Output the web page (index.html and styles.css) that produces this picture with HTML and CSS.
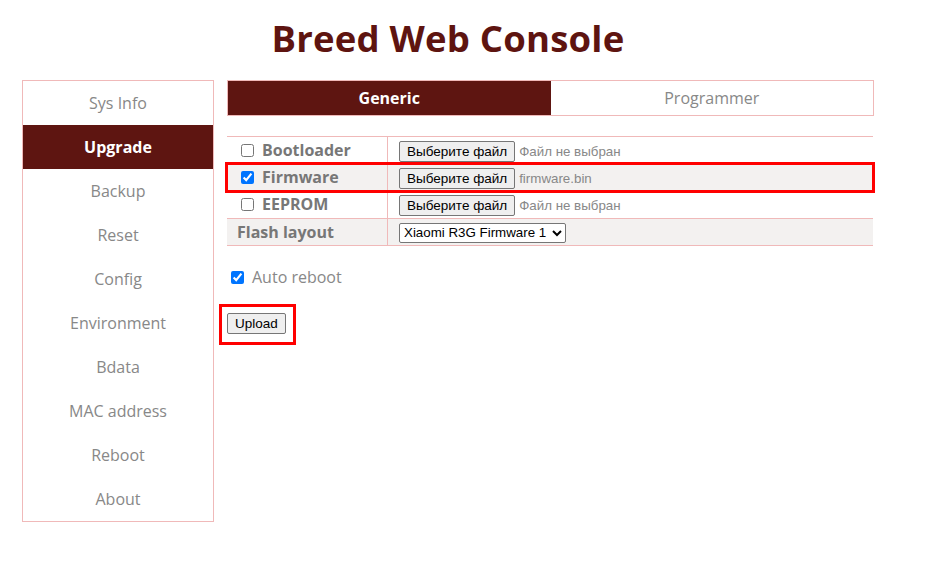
FILE: index.html
```html
<!DOCTYPE html>
<html>
<head>
<meta charset="utf-8">
<link rel="stylesheet" href="styles.css">
</head>
<body>
<div class="page">
  <h1 class="title">Breed Web Console</h1>
  <div class="layout">
    <nav class="sidebar">
      <div class="nav-item">Sys Info</div>
      <div class="nav-item active">Upgrade</div>
      <div class="nav-item">Backup</div>
      <div class="nav-item">Reset</div>
      <div class="nav-item">Config</div>
      <div class="nav-item">Environment</div>
      <div class="nav-item">Bdata</div>
      <div class="nav-item">MAC address</div>
      <div class="nav-item">Reboot</div>
      <div class="nav-item">About</div>
    </nav>
    <main class="main">
      <div class="tabs">
        <div class="tab active">Generic</div>
        <div class="tab">Programmer</div>
      </div>
      <div class="form-table">
        <div class="row first">
          <div class="cell label"><input type="checkbox" class="chk"><span>Bootloader</span></div>
          <div class="cell value"><span class="btn">Выберите файл</span><span class="file-name">Файл не выбран</span></div>
        </div>
        <div class="row alt highlight">
          <div class="cell label"><input type="checkbox" class="chk" checked><span>Firmware</span></div>
          <div class="cell value"><span class="btn">Выберите файл</span><span class="file-name">firmware.bin</span></div>
        </div>
        <div class="row">
          <div class="cell label"><input type="checkbox" class="chk"><span>EEPROM</span></div>
          <div class="cell value"><span class="btn">Выберите файл</span><span class="file-name">Файл не выбран</span></div>
        </div>
        <div class="row alt sep">
          <div class="cell label plain"><span>Flash layout</span></div>
          <div class="cell value"><select class="sel"><option>Xiaomi R3G Firmware 1</option></select></div>
        </div>
      </div>
      <label class="auto"><input type="checkbox" class="chk" checked><span>Auto reboot</span></label>
      <div class="upload-wrap"><span class="btn upload">Upload</span></div>
    </main>
  </div>
</div>
</body>
</html>
```

FILE: styles.css
```css
* { box-sizing: border-box; }
body {
  margin: 0;
  font-family: "Open Sans", "Noto Sans", sans-serif;
  background: #fff;
}
.page {
  width: 852px;
  margin-left: 22px;
}
.title {
  margin: 0;
  height: 80px;
  padding-top: 14px;
  text-align: center;
  font-size: 36.5px;
  line-height: 48px;
  font-weight: 700;
  color: #5e1410;
  letter-spacing: 0.2px;
}
.layout {
  display: flex;
  gap: 13px;
  align-items: flex-start;
}
.sidebar {
  width: 192px;
  border: 1px solid #f0b9b9;
  display: flex;
  flex-direction: column;
}
.nav-item {
  height: 44px;
  line-height: 44px;
  text-align: center;
  font-size: 16px;
  color: #888;
}
.nav-item.active {
  background: #5e1511;
  color: #fff;
  font-weight: 700;
}
.main {
  width: 647px;
}
.tabs {
  display: flex;
  height: 36px;
  border: 1px solid #f0b9b9;
}
.tab {
  flex: 1;
  text-align: center;
  line-height: 34px;
  font-size: 16px;
  color: #888;
}
.tab.active {
  background: #5e1511;
  color: #fff;
  font-weight: 700;
}
.form-table {
  margin-top: 20px;
  width: 646px;
  border-top: 1px solid #f0b9b9;
  border-bottom: 1px solid #f0b9b9;
}
.row {
  display: flex;
  height: 27px;
}
.row.sep {
  border-top: 1px solid #f0b9b9;
}
.row.alt { background: #f3f1f0; }
.row.highlight { outline: 3px solid #f00; outline-offset: -1px; position: relative; }
.cell {
  display: flex;
  align-items: center;
}
.cell.label {
  width: 161px;
  border-right: 1px solid #f0b9b9;
  padding-left: 13px;
  padding-bottom: 1px;
  font-size: 16px;
  font-weight: 700;
  color: #777;
}
.cell.label.plain { padding-left: 10px; }
.cell.value {
  flex: 1;
  padding-left: 11px;
  padding-top: 1px;
}
.chk {
  width: 13px;
  height: 13px;
  margin: 0 8px 0 1px;
  accent-color: #0075ff;
}
.btn {
  display: inline-block;
  font-family: "Liberation Sans", Arial, sans-serif;
  font-size: 13.5px;
  line-height: 17px;
  color: #000;
  background: #efefef;
  border: 1px solid #767676;
  border-radius: 2px;
  padding: 1px 7px;
}
.file-name {
  margin-left: 4px;
  font-family: "Liberation Sans", Arial, sans-serif;
  font-size: 13.33px;
  color: #888;
}
.sel {
  font-family: "Liberation Sans", Arial, sans-serif;
  font-size: 13.33px;
  height: 20px;
  width: 167px;
  color: #000;
  background: #fff;
  border: 1px solid #767676;
  border-radius: 2px;
  padding: 0;
}
.auto {
  display: flex;
  align-items: center;
  margin-top: 20px;
  padding-left: 3px;
  font-size: 16px;
  color: #888;
}
.auto .chk { margin-right: 8px; }
.upload-wrap {
  display: flex;
  align-items: flex-start;
  margin-top: 16px;
  margin-left: -8px;
  width: 77px;
  height: 41px;
  border: 3px solid #f00;
  padding: 6px 0 0 5px;
}
.btn.upload { padding: 1px 7px; }
```
